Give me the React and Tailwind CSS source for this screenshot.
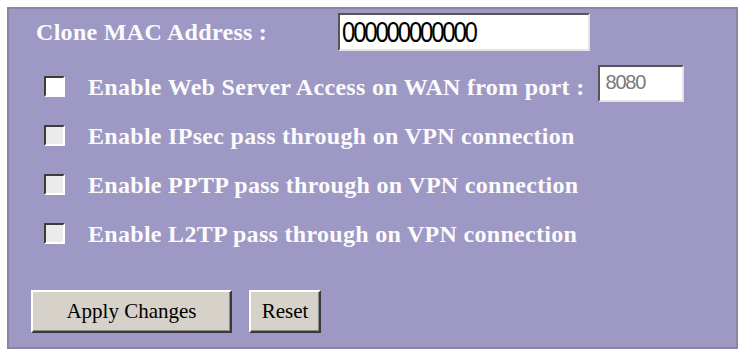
import React from 'react'

const label = "font-['Liberation_Serif',serif] font-bold text-[24px] tracking-[0.3px] text-[#fbfbfb] leading-none whitespace-nowrap"

function Box({ on }) {
  return (
    <span
      className={
        'block w-[21px] h-[21px] shrink-0 border-2 border-t-[#3c3c3c] border-l-[#3c3c3c] border-r-white border-b-white ' +
        (on ? 'bg-white' : 'bg-[#ebebeb]')
      }
    />
  )
}

function CheckRow({ text, on, children }) {
  return (
    <div className="flex items-center h-[49px]">
      <div className="ml-[35px] mr-[23px]">
        <Box on={on} />
      </div>
      <span className={label}>{text}</span>
      {children}
    </div>
  )
}

function Btn({ children, w }) {
  return (
    <button
      className={
        w +
        " h-[43px] bg-[#d6d2ca] border-2 border-t-white border-l-white border-r-[#3a3a3a] border-b-[#3a3a3a] shadow-[inset_-1px_-1px_0_#8a8a8a] font-['Liberation_Serif',serif] text-[21px] text-black leading-none"
      }
    >
      {children}
    </button>
  )
}

export default function App() {
  return (
    <div className="w-[740px] h-[351px] bg-white pt-[7px] pl-[7px] pr-[2px] pb-[2px]">
      <div className="h-full border-2 border-[#8a86a6] bg-[#9e98c5]">
        {/* MAC */}
        <div className="flex items-center pt-[4px]">
          <span className={label + ' ml-[27px] w-[302px]'}>
            Clone MAC Address<span className="ml-[6px]">:</span>
          </span>
          <div className="w-[252px] h-[38px] bg-white border-2 border-t-[#555] border-l-[#555] border-r-[#e4e4e4] border-b-[#e4e4e4] flex items-center pl-[2px]">
            <span className="inline-block scale-y-[1.2] font-['Liberation_Sans',sans-serif] text-[24px] tracking-[-2.2px] text-black leading-none">
              000000000000
            </span>
          </div>
        </div>

        <div className="mt-[11px]">
          <CheckRow text="Enable Web Server Access on WAN from port :" on>
            <div className="ml-[14px] mb-[6px] w-[86px] h-[37px] bg-white border-2 border-t-[#555] border-l-[#555] border-r-[#e4e4e4] border-b-[#e4e4e4] pl-[5px] pt-[4px]">
              <span className="font-['Liberation_Sans',sans-serif] text-[20px] tracking-[-1.2px] text-[#7a7a7a] leading-none">
                8080
              </span>
            </div>
          </CheckRow>
          <CheckRow text="Enable IPsec pass through on VPN connection" />
          <CheckRow text="Enable PPTP pass through on VPN connection" />
          <CheckRow text="Enable L2TP pass through on VPN connection" />
        </div>

        <div className="flex gap-[17px] ml-[22px] mt-[32px]">
          <Btn w="w-[201px]">Apply Changes</Btn>
          <Btn w="w-[72px]">Reset</Btn>
        </div>
      </div>
    </div>
  )
}
